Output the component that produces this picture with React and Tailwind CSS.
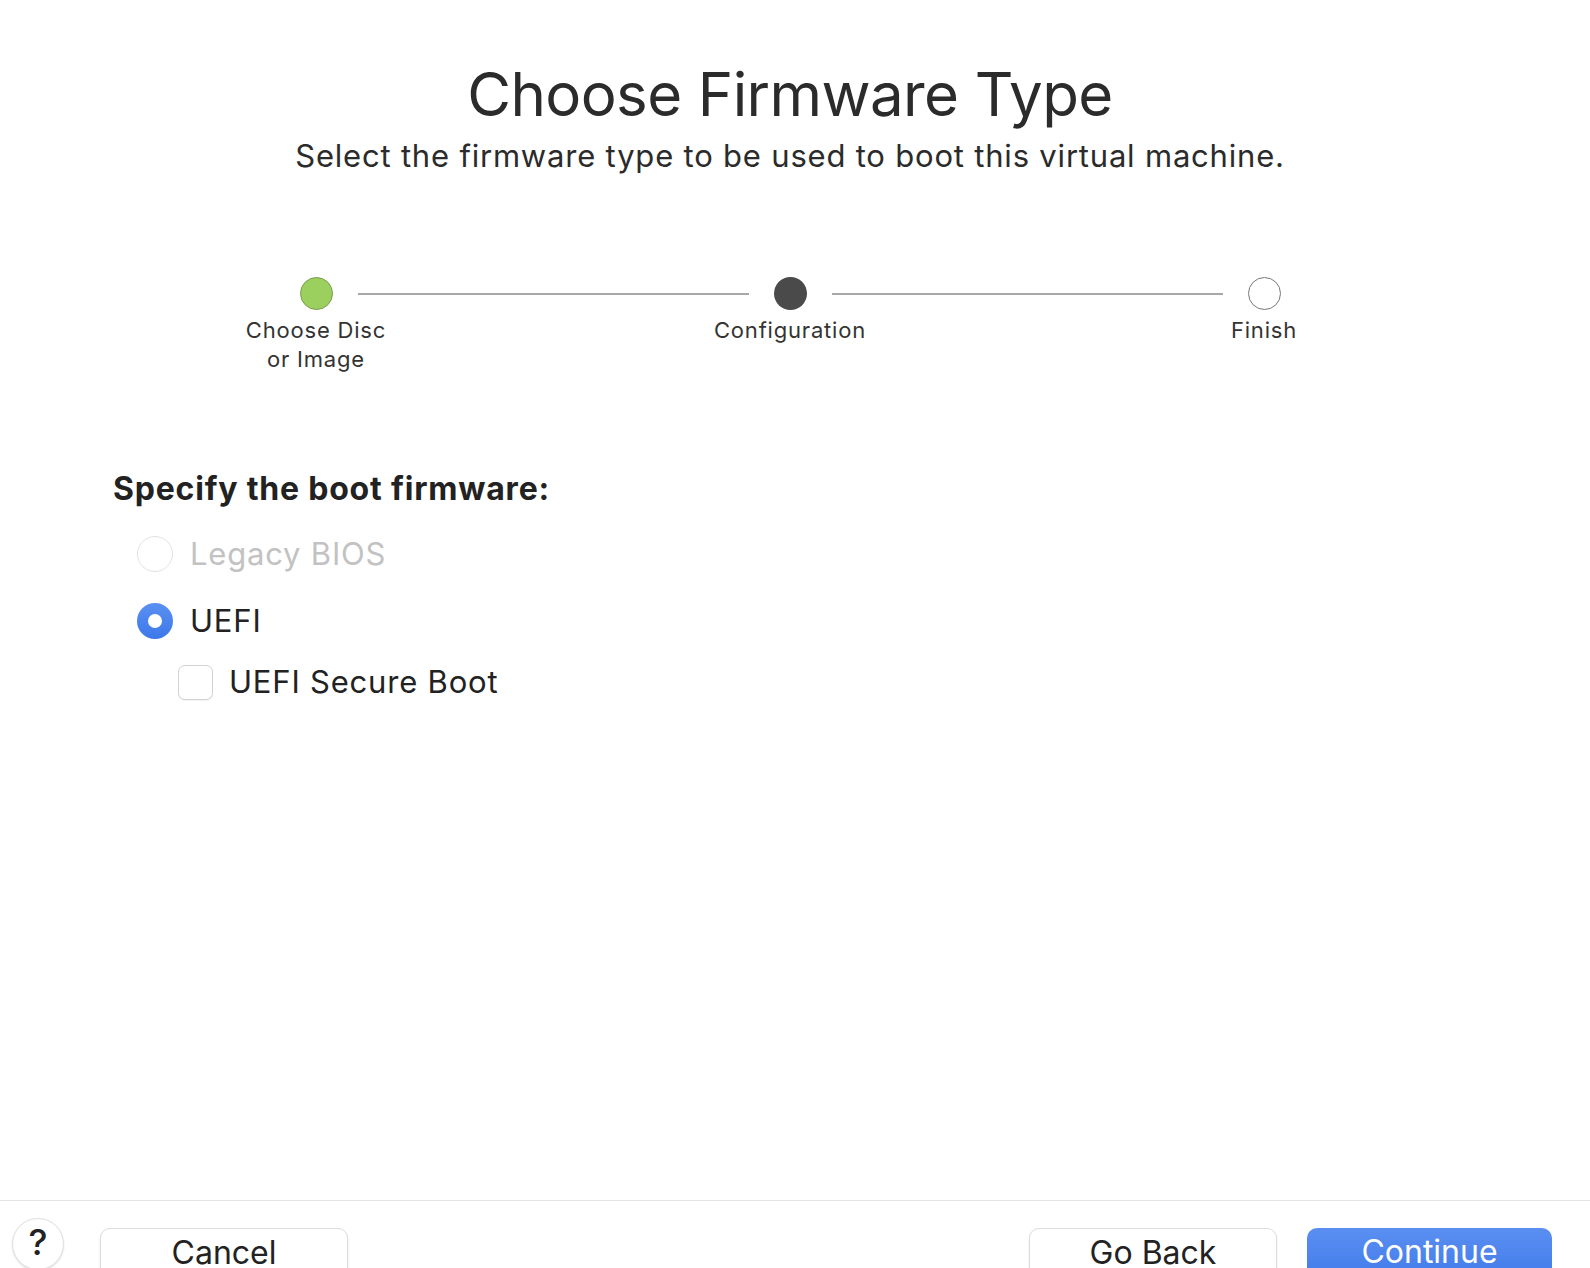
import React from "react";

const font = { fontFamily: "Inter, 'Liberation Sans', sans-serif" };

function Step({ label }) {
  return (
    <div className="flex w-[200px] flex-col items-center text-center text-[22px] leading-[29px] tracking-[0.8px] text-[#333]">
      {label}
    </div>
  );
}

export default function App() {
  return (
    <div className="relative h-[1268px] w-[1590px] overflow-hidden bg-white text-[#2a2a2a]" style={font}>
      <div className="flex w-[1580px] flex-col items-center pt-[57px]">
        <h1 className="text-[60px] font-normal leading-[74px] tracking-[-0.6px] text-[#2b2b2b]">Choose Firmware Type</h1>
        <p className="mt-[6px] text-[31px] leading-[38px] tracking-[0.8px] text-[#2b2b2b]">
          Select the firmware type to be used to boot this virtual machine.
        </p>
      </div>

      <div className="mt-[102px] flex w-[1580px] flex-col">
        <div className="ml-[300px] flex w-[981px] items-center">
          <div className="h-[33px] w-[33px] rounded-full border border-[#7a9a50] bg-[#9bd05e]" />
          <div className="mx-[25px] h-[2px] flex-1 bg-[#a8a8a8]" />
          <div className="h-[33px] w-[33px] rounded-full bg-[#4a4a4a]" />
          <div className="mx-[25px] h-[2px] flex-1 bg-[#a8a8a8]" />
          <div className="h-[33px] w-[33px] rounded-full border-[1.5px] border-[#777] bg-white" />
        </div>
        <div className="ml-[216px] mt-[6px] flex w-[1148px] justify-between">
          <Step label={<><span>Choose Disc</span><span>or Image</span></>} />
          <Step label="Configuration" />
          <Step label="Finish" />
        </div>
      </div>

      <div className="ml-[113px] mt-[95px] flex flex-col">
        <div className="text-[32px] font-bold leading-[40px] tracking-[0.8px] text-[#222]">Specify the boot firmware:</div>
        <div className="ml-[24px] mt-[27px] flex flex-col gap-[31px]">
          <div className="flex items-center gap-[17px]">
            <div className="h-[36px] w-[36px] rounded-full border border-[#e2e2e2] bg-white" />
            <span className="text-[31px] leading-[36px] tracking-[0.8px] text-[#c2c2c2]">Legacy BIOS</span>
          </div>
          <div className="flex items-center gap-[17px]">
            <div className="flex h-[36px] w-[36px] items-center justify-center rounded-full bg-gradient-to-b from-[#5a90f1] to-[#3d78ea]">
              <div className="h-[14px] w-[14px] rounded-full bg-white" />
            </div>
            <span className="text-[31px] leading-[36px] tracking-[0.8px] text-[#222]">UEFI</span>
          </div>
          <div className="ml-[41px] -mt-[6px] flex items-center gap-[16px]">
            <div className="h-[35px] w-[35px] rounded-[7px] border border-[#d2d2d2] bg-white shadow-[0_1px_1px_rgba(0,0,0,0.06)]" />
            <span className="text-[31px] leading-[36px] tracking-[0.8px] text-[#222]">UEFI Secure Boot</span>
          </div>
        </div>
      </div>

      <div className="absolute left-0 top-[1200px] h-[68px] w-[1590px] border-t border-[#e4e4e4] bg-white">
        <div className="relative h-full w-full">
          <div className="absolute left-[12px] top-[17px] flex h-[52px] w-[52px] items-start justify-center rounded-full border border-[#e0e0e0] bg-white pt-[3px] text-[36px] font-medium leading-[40px] text-[#222] shadow-[0_1px_2px_rgba(0,0,0,0.12)]">?</div>
          <div className="absolute left-[100px] top-[27px] flex h-[56px] w-[248px] items-start justify-center rounded-[10px] border border-[#dedede] bg-white pt-[5px] text-[32px] leading-[38px] text-[#222] shadow-[0_1px_2px_rgba(0,0,0,0.12)]">Cancel</div>
          <div className="absolute left-[1029px] top-[27px] flex h-[56px] w-[248px] items-start justify-center rounded-[10px] border border-[#dedede] bg-white pt-[5px] text-[32px] leading-[38px] text-[#222] shadow-[0_1px_2px_rgba(0,0,0,0.12)]">Go Back</div>
          <div className="absolute left-[1307px] top-[27px] flex h-[56px] w-[245px] items-start justify-center rounded-[10px] bg-gradient-to-b from-[#5b8ff1] to-[#3e79ea] pt-[5px] text-[32px] leading-[38px] text-white">Continue</div>
        </div>
      </div>
    </div>
  );
}
